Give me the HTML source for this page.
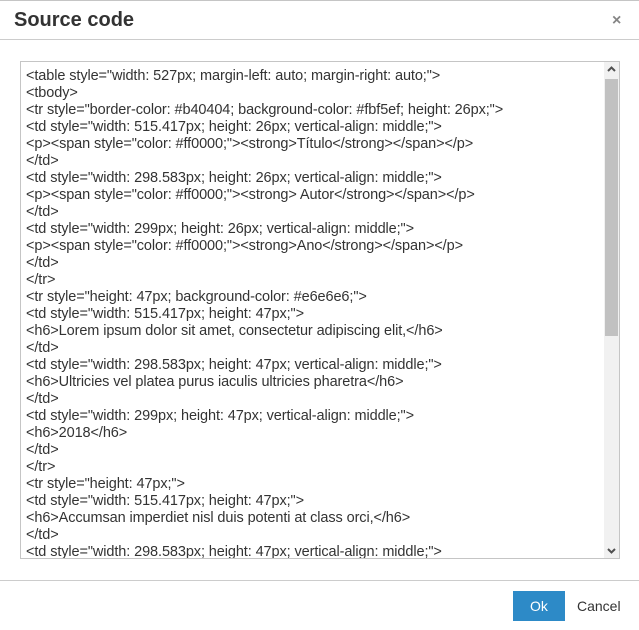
<!DOCTYPE html>
<html><head><style>
body{margin:0;width:639px;height:630px;background:#fff;font-family:"Liberation Sans",sans-serif;position:relative;overflow:hidden}
.top{position:absolute;left:0;top:0;width:639px;height:1px;background:#c5c5c5}
.title{position:absolute;left:14px;top:9px;font-size:20px;font-weight:bold;color:#333}
.x{position:absolute;left:612px;top:12px;font-size:16px;color:#858585;font-weight:bold}
.hl{position:absolute;left:0;top:39px;width:639px;height:1px;background:#ccc}
.ta{position:absolute;left:20px;top:61px;width:598px;height:496px;border:1px solid #c5c5c5;overflow:hidden}
.code{position:absolute;left:5px;top:6px;font-size:14.5px;line-height:17px;color:#333;white-space:pre;letter-spacing:-0.1px}
.sb{position:absolute;left:583px;top:0;width:15px;height:496px;background:#f1f1f1}
.th{position:absolute;left:1px;top:17px;width:13px;height:257px;background:#c1c1c1}
.fl{position:absolute;left:0;top:580px;width:639px;height:1px;background:#ccc}
.ok{position:absolute;left:513px;top:591px;width:52px;height:30px;background:#2d8ac7;color:#fff;font-size:14px;text-align:center;line-height:30px}
.cancel{position:absolute;left:577px;top:598px;font-size:14px;color:#333}
</style></head><body>
<div class="top"></div>
<div class="title">Source code</div>
<div class="x">×</div>
<div class="hl"></div>
<div class="ta"><div class="code">&lt;table style="width: 527px; margin-left: auto; margin-right: auto;"&gt;
&lt;tbody&gt;
&lt;tr style="border-color: #b40404; background-color: #fbf5ef; height: 26px;"&gt;
&lt;td style="width: 515.417px; height: 26px; vertical-align: middle;"&gt;
&lt;p&gt;&lt;span style="color: #ff0000;"&gt;&lt;strong&gt;Título&lt;/strong&gt;&lt;/span&gt;&lt;/p&gt;
&lt;/td&gt;
&lt;td style="width: 298.583px; height: 26px; vertical-align: middle;"&gt;
&lt;p&gt;&lt;span style="color: #ff0000;"&gt;&lt;strong&gt; Autor&lt;/strong&gt;&lt;/span&gt;&lt;/p&gt;
&lt;/td&gt;
&lt;td style="width: 299px; height: 26px; vertical-align: middle;"&gt;
&lt;p&gt;&lt;span style="color: #ff0000;"&gt;&lt;strong&gt;Ano&lt;/strong&gt;&lt;/span&gt;&lt;/p&gt;
&lt;/td&gt;
&lt;/tr&gt;
&lt;tr style="height: 47px; background-color: #e6e6e6;"&gt;
&lt;td style="width: 515.417px; height: 47px;"&gt;
&lt;h6&gt;Lorem ipsum dolor sit amet, consectetur adipiscing elit,&lt;/h6&gt;
&lt;/td&gt;
&lt;td style="width: 298.583px; height: 47px; vertical-align: middle;"&gt;
&lt;h6&gt;Ultricies vel platea purus iaculis ultricies pharetra&lt;/h6&gt;
&lt;/td&gt;
&lt;td style="width: 299px; height: 47px; vertical-align: middle;"&gt;
&lt;h6&gt;2018&lt;/h6&gt;
&lt;/td&gt;
&lt;/tr&gt;
&lt;tr style="height: 47px;"&gt;
&lt;td style="width: 515.417px; height: 47px;"&gt;
&lt;h6&gt;Accumsan imperdiet nisl duis potenti at class orci,&lt;/h6&gt;
&lt;/td&gt;
&lt;td style="width: 298.583px; height: 47px; vertical-align: middle;"&gt;</div>
<div class="sb">
<svg style="position:absolute;left:3px;top:4px" width="9" height="7"><path d="M1 5 L4.5 1.5 L8 5" stroke="#505050" stroke-width="2" fill="none"/></svg>
<div class="th"></div>
<svg style="position:absolute;left:3px;top:485px" width="9" height="7"><path d="M1 2 L4.5 5.5 L8 2" stroke="#505050" stroke-width="2" fill="none"/></svg>
</div>
</div>
<div class="fl"></div>
<div class="ok">Ok</div>
<div class="cancel">Cancel</div>
</body></html>
